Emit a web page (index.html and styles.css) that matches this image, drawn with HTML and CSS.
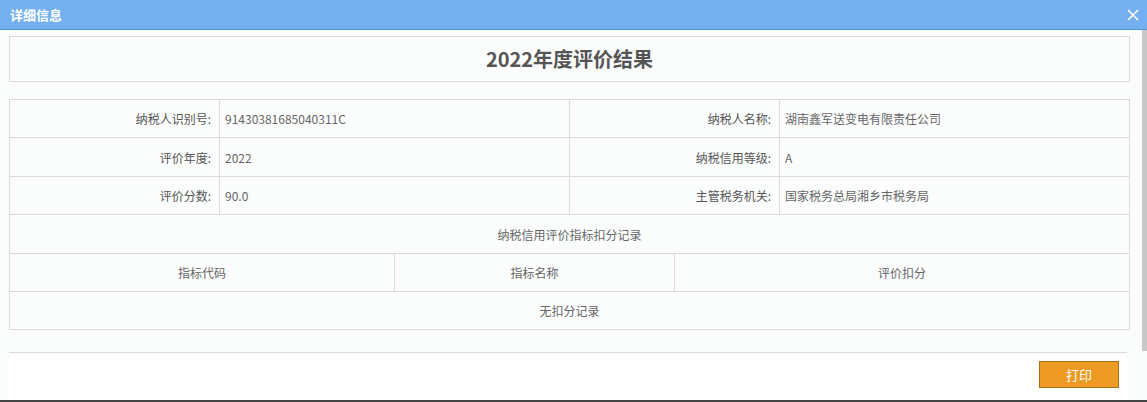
FILE: index.html
```html
<!DOCTYPE html>
<html lang="zh-CN">
  <head>
    <meta charset="UTF-8" />
    <title>详细信息</title>
    <link rel="stylesheet" href="styles.css">
  </head>
  <body>
    <div class="dialog">
      <div class="dlg-head">
        <span class="dlg-title">详细信息</span>
        <a class="dlg-close" href="#">
          <svg width="12" height="12" viewBox="0 0 12 12">
            <path d="M1 1L11 11M11 1L1 11" stroke="#fff" stroke-width="1.6" />
          </svg>
        </a>
      </div>
      <div class="dlg-body">
        <div class="result-title">2022年度评价结果</div>
        <table class="info">
          <colgroup>
            <col style="width:210px">
            <col style="width:175px">
            <col style="width:175px">
            <col style="width:105px">
            <col style="width:105px">
            <col>
          </colgroup>
          <tr>
            <td class="label">纳税人识别号:</td>
            <td class="value" colspan="2">91430381685040311C</td>
            <td class="label" colspan="2">纳税人名称:</td>
            <td class="value">湖南鑫军送变电有限责任公司</td>
          </tr>
          <tr class="tall">
            <td class="label">评价年度:</td>
            <td class="value" colspan="2">2022</td>
            <td class="label" colspan="2">纳税信用等级:</td>
            <td class="value">A</td>
          </tr>
          <tr>
            <td class="label">评价分数:</td>
            <td class="value" colspan="2">90.0</td>
            <td class="label" colspan="2">主管税务机关:</td>
            <td class="value">国家税务总局湘乡市税务局</td>
          </tr>
          <tr class="tall">
            <td class="center" colspan="6">纳税信用评价指标扣分记录</td>
          </tr>
          <tr>
            <td class="center" colspan="2">指标代码</td>
            <td class="center" colspan="2">指标名称</td>
            <td class="center" colspan="2">评价扣分</td>
          </tr>
          <tr>
            <td class="center" colspan="6">无扣分记录</td>
          </tr>
        </table>
      </div>
      <div class="dlg-foot">
        <button class="btn-print">打印</button>
      </div>
      <div class="scroll-thumb"></div>
    </div>
  </body>
</html>
```

FILE: styles.css
```css
body {
  margin: 0;
  font-family: "Noto Sans CJK SC", "Liberation Sans", sans-serif;
  font-size: 12px;
  background-color: #fbfdfd;
}

.dialog {
  position: relative;
  height: 400px;
  border-bottom: 2px solid #444;
  overflow: hidden;
}

.dlg-head {
  display: flex;
  justify-content: space-between;
  align-items: center;
  height: 29px;
  padding: 0 6px 0 10px;
  background-color: #74b0ef;
  border-bottom: 1px solid #4f93db;
}

.dlg-title {
  color: #fff;
  font-size: 13px;
  font-weight: bold;
}

.dlg-close {
  display: flex;
  padding: 2px;
}

.dlg-body {
  padding: 6px 17px 22px 9px;
}

.result-title {
  height: 44px;
  line-height: 44px;
  border: 1px solid #dadada;
  text-align: center;
  font-size: 20px;
  font-weight: bold;
  color: #555;
  margin-bottom: 17px;
}

.info {
  width: 100%;
  table-layout: fixed;
  border-collapse: collapse;
}

.info td {
  height: 37px;
  padding: 0 6px;
  border: 1px solid #dadada;
  color: #666;
  white-space: nowrap;
}

.info .tall td {
  height: 38px;
}

.info .label {
  text-align: right;
  padding-right: 8px;
  color: #555;
}

.info .value {
  text-align: left;
  padding-left: 5px;
}

.info .center {
  text-align: center;
}

.dlg-foot {
  display: flex;
  justify-content: flex-end;
  align-items: flex-start;
  height: 48px;
  margin: 0 20px 0 9px;
  padding: 8px 8px 0 0;
  box-sizing: border-box;
  border-top: 1px solid #dadada;
  background-color: #fff;
}

.btn-print {
  width: 80px;
  height: 27px;
  border: 1px solid #a96c17;
  background-color: #ec9a22;
  color: #fff;
  font-family: inherit;
  font-size: 13px;
  cursor: pointer;
}

.scroll-thumb {
  position: absolute;
  right: 0;
  top: 30px;
  width: 5px;
  height: 321px;
  background-color: #c8c8c8;
}
```
